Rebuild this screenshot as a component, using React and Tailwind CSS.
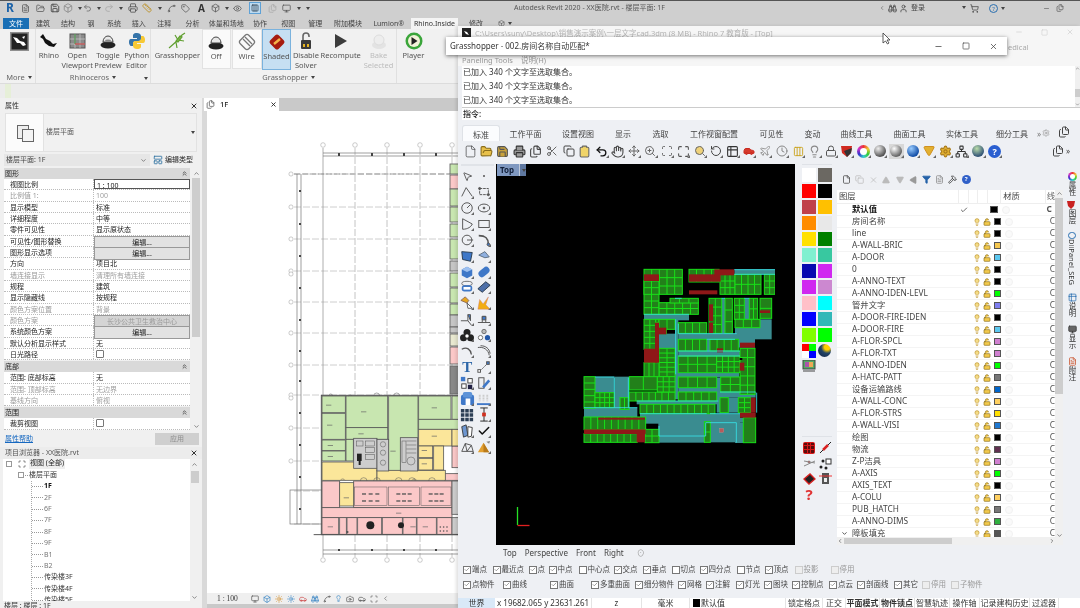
import React from "react";
import {
  File, FolderOpen, Save, Printer, Files, Scissors, Copy, Clipboard, Undo2, Redo2, Hand, Move, ZoomIn, Scan, Maximize, Search,
  RotateCcw, Table2, Car, Plane, Clock, Lightbulb, Lock, LockOpen, Settings, Network, Minus, Square, X, Check, ChevronDown, ChevronUp,
  ChevronLeft, ChevronRight, ChevronsUp, MousePointer2, Triangle, Filter, Hammer, LayoutPanelTop, Tag, Box, Columns3, ShoppingCart, User, Binoculars, Monitor, Ruler, FileText, Spline, Sun, Camera, Eye,
} from "lucide-react";

const Caret = () => <span className="inline-block w-0 h-0 border-x-[2.5px] border-x-transparent border-t-[3px] border-t-[#444] ml-[3px] align-middle" />;

const S = ({ children }) => (
  <svg width="14" height="14" viewBox="0 0 16 16" fill="none" stroke="#555" strokeWidth="1.1">{children}</svg>
);

function Prop({ label, value, dim, btn, box, check, bold }) {
  return (
    <div className="grid grid-cols-[90px_96px] h-[11.33px] leading-[11px] border-b border-dotted border-[#bbbbbb] bg-white">
      <div className={`pl-[6px] border-r border-dotted border-[#bbbbbb] truncate ${dim ? "text-[#9a9a9a]" : "text-[#222]"} ${bold ? "font-medium" : ""}`}>{label}</div>
      {btn ? (
        <div className={`text-center border border-[#999] ${dim ? "bg-[#d4d4d4] text-[#999]" : "bg-[#e2e2e2] text-[#222]"}`}>{value}</div>
      ) : check ? (
        <div className="pl-[2px] flex items-center"><span className="w-[8px] h-[8px] border border-[#777] bg-white rounded-[1px]" /></div>
      ) : (
        <div className={`pl-[2px] truncate ${box ? "border border-[#555]" : ""} ${dim ? "text-[#a0a0a0]" : "text-[#222]"}`}>{value}</div>
      )}
    </div>
  );
}

const Sec = ({ t }) => (
  <div className="h-[11px] bg-[#d9d9d9] flex items-center justify-between pl-[1px] pr-[2px] leading-none text-[#222]">
    <span>{t}</span>
    <ChevronsUp size={7} className="text-[#333]" strokeWidth={2.5} />
  </div>
);

const G1 = [
  ["视图比例", "1 : 100", { box: true }], ["比例值 1:", "100", { dim: true }], ["显示模型", "标准"], ["详细程度", "中等"], ["零件可见性", "显示原状态"],
  ["可见性/图形替换", "编辑...", { btn: true }], ["图形显示选项", "编辑...", { btn: true }], ["方向", "项目北"], ["墙连接显示", "清理所有墙连接", { dim: true }],
  ["规程", "建筑"], ["显示隐藏线", "按规程"], ["颜色方案位置", "背景", { dim: true }], ["颜色方案", "长沙公共卫生救治中心", { dim: true, btn: true }],
  ["系统颜色方案", "编辑...", { btn: true }], ["默认分析显示样式", "无"], ["日光路径", "", { check: true }],
];

function Properties() {
  return (
    <div className="h-[349px] flex flex-col text-[7px]">
      <div className="h-[14px] mt-[1px] px-[5px] flex items-center justify-between">
        <span className="text-[#333]">属性</span><X size={8} strokeWidth={3} className="text-[#333] mr-[-1px]" />
      </div>
      <div className="h-[39px] mx-[5px] bg-[#f1f1f1] border border-[#e2e2e2] flex items-center">
        <div className="w-[38px] h-full bg-[#fbfbfb] border-r border-[#e2e2e2] flex items-center justify-center">
          <svg width="20" height="20" viewBox="0 0 20 20" fill="#eee" stroke="#666"><rect x="2.5" y="2.5" width="11" height="13" /><rect x="7.5" y="6.5" width="11" height="12" fill="#f4f4f4" /></svg>
        </div>
        <span className="ml-[2px] text-[#555]">楼层平面</span>
        <span className="ml-auto mr-[1px]"><Caret /></span>
      </div>
      <div className="h-[12px] mt-[2px] ml-[4px] flex">
        <div className="w-[146px] bg-[#e6e6e6] pl-[2px] flex items-center justify-between pr-[3px] text-[#444]"><span>楼层平面: 1F</span><ChevronDown size={7} /></div>
        <div className="ml-[3px] flex items-center gap-[2px] text-[#222]">
          <LayoutPanelTop size={10} className="text-[#2a6f9f]" /><span>编辑类型</span>
        </div>
      </div>
      <div className="mt-[2px] ml-[4px] flex">
        <div className="w-[186px] h-[262px] overflow-hidden">
          <Sec t="图形" />
          {G1.map(([a, b, o]) => <Prop key={a} label={a} value={b} {...(o || {})} />)}
          <div className="h-[1px]" />
          <Sec t="底部" />
          <Prop label="范围: 底部标高" value="无" />
          <Prop label="范围: 顶部标高" value="无边界" dim />
          <Prop label="基线方向" value="俯视" dim />
          <div className="h-[1px]" />
          <Sec t="范围" />
          <Prop label="裁剪视图" check />
        </div>
        <div className="w-[10px] ml-[1px] bg-[#f0f0f0] flex flex-col items-center pt-[2px]">
          <ChevronUp size={7} className="text-[#444]" />
          <div className="w-[8px] h-[159px] mt-[1px] bg-[#cdcdcd]" />
          <div className="mt-auto"><ChevronDown size={7} className="text-[#444]" /></div>
        </div>
      </div>
      <div className="h-[14px] mt-[2px] ml-[5px] flex items-center justify-between pr-[3px]">
        <span className="text-[#1668c0] underline">属性帮助</span>
        <span className="w-[44px] h-[12px] bg-[#cfcfcf] text-[#8f8f8f] text-center leading-[12px]">应用</span>
      </div>
    </div>
  );
}

const Tw = ({ t, bold, dim }) => (
  <div className="h-[11.4px] flex items-center">
    <span className="w-[11px] border-t border-dotted border-[#999]" />
    <span className={`ml-[1px] ${bold ? "font-bold text-[#111]" : dim ? "text-[#777]" : "text-[#333]"}`}>{t}</span>
  </div>
);

function Browser() {
  return (
    <div className="flex-1 flex flex-col text-[7px] min-h-0">
      <div className="h-[12px] px-[5px] flex items-center justify-between bg-[#ececec] text-[#555]">
        <span>项目浏览器 - XX医院.rvt</span><X size={8} strokeWidth={3} className="text-[#333] mr-[-1px]" />
      </div>
      <div className="flex mx-[3px] h-[142px]">
        <div className="flex-1 bg-white overflow-hidden">
          <div className="h-[11.4px] mt-[-1px] flex items-center pl-[3px]">
            <span className="w-[6px] h-[6px] border border-[#999] mr-[6px]" />
            <Scan size={8} className="text-[#333]" />
            <span className="ml-[3px] bg-[#efefef] px-[1px] text-[#222]">视图 (全部)</span>
          </div>
          <div className="h-[11.4px] flex items-center pl-[15px]">
            <span className="w-[6px] h-[6px] border border-[#999] mr-[1px]" />
            <span className="w-[3px] border-t border-dotted border-[#999]" />
            <span className="ml-[1px] text-[#333]">楼层平面</span>
          </div>
          <div className="ml-[28px] border-l border-dotted border-[#aaa]">
            {["1F", "2F", "6F", "7F", "8F", "9F", "B1", "B2", "传染楼3F", "传染楼4F", "传染楼5F"].map((t, i) => (
              <Tw key={t} t={t} bold={i === 0} dim={i > 0 && i < 8} />
            ))}
          </div>
        </div>
        <div className="w-[9px] bg-[#f0f0f0] flex flex-col items-center pt-[2px]">
          <ChevronUp size={7} className="text-[#444]" />
          <div className="w-[8px] h-[12px] mt-[3px] bg-[#cdcdcd]" />
          <div className="mt-auto"><ChevronDown size={7} className="text-[#444]" /></div>
        </div>
      </div>
      <div className="h-[8px] pl-[4px] text-[#333] leading-[9px]">楼层 : 楼层 : 1F</div>
    </div>
  );
}

/* ---------- floor plan drawing ---------- */
const RG = [[15,45,70,50],[15,97,70,78],[15,177,70,32],[15,210,70,30],[87,45,125,95],[87,140,125,35],[87,175,22,65],[215,45,88,225],[305,45,97,70],[405,45,30,70],[305,115,130,30]];
const RY = [[15,243,165,55],[180,268,205,30],[305,145,100,50],[405,145,30,50],[305,195,42,35],[305,232,42,35],[350,195,30,72],[68,305,42,70]];
const RP = [[15,300,53,80],[110,300,295,80],[15,380,390,30],[15,410,50,50],[68,410,20,50],[90,410,30,50],[122,410,72,50],[196,410,60,50],[258,410,40,50],[300,410,58,50],[360,410,45,50],[383,278,50,20],[405,195,30,65]];
const RC = [[110,172,70,90],[180,175,35,95],[250,170,52,100],[405,300,30,100],[405,410,30,50]];
const RIGHT = [[163,10,"#c8e6b0"],[174,14,"#fbc8c8"],[188,17,"#c8e6b0"],[206,15,"#c8e6b0"],[223,13,"#c8e6b0"],[238,20,"#c8e6b0"],[260,10,"#c5c5c5"],[272,14,"#c8e6b0"],[287,15,"#c8e6b0"],[303,11,"#c8e6b0"],[314,12,"#c5c5c5"],[326,6,"#c5c5c5"],[333,12,"#e8e8d0"],[346,17,"#fbc8c8"],[365,28,"#888888"]];
const HY = [173,206,238,270,301,332,364,394,427,460,490,523];
const VX = [353,385,418,450];

function Plan() {
  return (
    <svg viewBox="205 110 253 482" className="w-full h-full block">
      {VX.map((x) => <line key={x} x1={x} x2={x} y1="147" y2="556" stroke="#c4c4c4" strokeWidth="1" strokeDasharray="7 2" />)}
      {HY.map((y) => <line key={y} x1="292" x2="449" y1={y} y2={y} stroke="#c8c8c8" strokeWidth="0.9" strokeDasharray="7 2" />)}
      <line x1="321" x2="321" y1="147" y2="556" stroke="#999" strokeWidth="0.8" />
      {[321, ...VX].map((x) => (
        <g key={x} fill="#fff" stroke="#aaa" strokeWidth="0.6"><circle cx={x} cy="144" r="2.3" /><circle cx={x} cy="559" r="2.3" /></g>
      ))}
      {HY.slice(0, 10).map((y) => <circle key={y} cx="289" cy={y} r="2.1" fill="#fff" stroke="#aaa" strokeWidth="0.6" />)}
      <circle cx="289" cy="273" r="2.1" fill="#fff" stroke="#aaa" strokeWidth="0.6" />
      <circle cx="289" cy="397" r="2.1" fill="#fff" stroke="#aaa" strokeWidth="0.6" />
      <g stroke="#777" strokeWidth="0.7">
        <line x1="321" x2="460" y1="152" y2="152" /><line x1="321" x2="460" y1="155" y2="155" />
        <line x1="321" x2="460" y1="549" y2="549" /><line x1="321" x2="460" y1="553" y2="553" />
        <line x1="295" x2="295" y1="173" y2="523" /><line x1="299" x2="299" y1="173" y2="523" />
        <line x1="292" x2="448" y1="173" y2="173" strokeDasharray="6 2" />
        <rect x="288" y="489" width="33" height="34" fill="none" />
      </g>
      {[336, 369, 401, 433].map((x) => <g key={x} fill="#444"><rect x={x} y="152" width="2" height="3" /><rect x={x} y="548" width="2" height="2" /></g>)}
      {[189, 222, 254, 286, 318, 349, 379, 411, 443, 475, 507].map((y) => <rect key={y} x="297" y={y} width="2" height="2" fill="#444" />)}
      <g stroke="#666" strokeWidth="0.9">
        {RIGHT.map(([y, h, f]) => <rect key={y} x="448" y={y} width="14" height={h} fill={f} />)}
      </g>
      <g transform="translate(315 380) scale(0.3333)" stroke="#555" strokeWidth="2.4">
        <rect x="14" y="44" width="422" height="417" fill="#fff" stroke="none" />
        {RG.map((r) => <rect key={r.join()} x={r[0]} y={r[1]} width={r[2]} height={r[3]} fill="#c8e6b0" />)}
        {RP.map((r) => <rect key={r.join()} x={r[0]} y={r[1]} width={r[2]} height={r[3]} fill="#fbc8c8" />)}
        {RY.map((r) => <rect key={r.join()} x={r[0]} y={r[1]} width={r[2]} height={r[3]} fill="#fbe69a" />)}
        {RC.map((r) => <rect key={r.join()} x={r[0]} y={r[1]} width={r[2]} height={r[3]} fill="#cdcdcd" />)}
        <g fill="none" strokeWidth="1.5">
          <rect x="112" y="318" width="98" height="55" /><rect x="214" y="318" width="94" height="55" /><rect x="312" y="318" width="90" height="55" />
          <path d="M130 300a10 10 0 0 1 20 0M170 300a10 10 0 0 1 20 0M235 300a10 10 0 0 1 20 0M275 300a10 10 0 0 1 20 0M335 300a10 10 0 0 1 20 0M70 298a8 8 0 0 1 14 0M285 298a8 8 0 0 1 14 0" />
          <path d="M35 45a6 6 0 0 1 12 0M95 45a6 6 0 0 1 10 0M170 45a6 6 0 0 1 18 0M230 45a6 6 0 0 1 18 0" />
          <rect x="255" y="180" width="12" height="65" /><circle cx="282" cy="240" r="12" /><path d="M268 180h30M268 192h30M268 204h30M268 216h30" />
          <circle cx="198" cy="190" r="8" /><circle cx="198" cy="215" r="8" /><circle cx="198" cy="245" r="8" />
          <rect x="118" y="180" width="20" height="15" /><rect x="145" y="180" width="28" height="15" /><rect x="145" y="200" width="28" height="15" /><rect x="145" y="220" width="28" height="15" />
        </g>
        <g fill="#555" stroke="none">
          <rect x="120" y="218" width="14" height="22" fill="#222" /><rect x="125" y="238" width="6" height="14" fill="#222" />
          <circle cx="160" cy="433" r="12" fill="#222" /><circle cx="252" cy="433" r="9" fill="#222" /><rect x="88" y="450" width="6" height="6" />
          {[135,155,175,238,255,272,335,352,368].map((x) => <React.Fragment key={x}><rect x={x} y="337" width="12" height="4" /><rect x={x} y="358" width="12" height="4" /></React.Fragment>)}
          {[370,380,390].map((x) => <React.Fragment key={x}><circle cx={x} cy="438" r="2.500" /><circle cx={x} cy="450" r="2.500" /></React.Fragment>)}
        </g>
        <g fill="#666" stroke="none" opacity="0.7">
          {[[35,72],[38,132],[40,193],[40,226],[140,92],[132,158],[228,210],[352,80],[352,165],[322,208],[322,248],[88,350],[245,396],[40,437],[288,437],[325,437]].map(([x, y]) => <rect key={x + "-" + y} x={x - 8} y={y - 1} width="16" height="3" />)}
        </g>
        <rect x="13" y="43" width="423" height="418" fill="none" strokeWidth="3" />
        <line x1="-10" x2="440" y1="461" y2="461" strokeWidth="3" />
      </g>
    </svg>
  );
}

/* ---------- ribbon ---------- */
const Rb = ({ cls, lines, children, dim }) => (
  <div className={`${cls} h-[41px] flex flex-col items-center pt-[2px]`}>
    <div className="h-[20px] flex items-center justify-center">{children}</div>
    <div className={`text-center leading-[9.5px] whitespace-nowrap ${dim ? "text-[#bcbcbc]" : "text-[#555]"}`}>
      {lines.map((l) => <div key={l}>{l}</div>)}
    </div>
  </div>
);

const Dome = ({ hatch }) => (
  <svg width="18" height="18" viewBox="0 0 18 18">
    <ellipse cx="9" cy="13" rx="7.5" ry="3.5" fill="#222" />
    <path d="M4 10a5 6 0 0 1 10 0z" fill="#e8e8e8" stroke="#444" />
    {hatch && <ellipse cx="9" cy="8.5" rx="3" ry="1" fill="#888" />}
  </svg>
);

function RibbonTabs() {
  const tabs = [["建筑","w-[26px]"],["结构","w-[24px]"],["钢","w-[22px]"],["系统","w-[24px]"],["插入","w-[25.500px]"],["注释","w-[25.500px]"],["分析","w-[31px]"],["体量和场地","w-[36.500px]"],["协作","w-[31px]"],["视图","w-[25.500px]"],["管理","w-[28.500px]"],["附加模块","w-[37px]"],["Lumion®","w-[44.500px]"]];
  return (
    <div className="h-[11px] flex items-stretch pl-[3px] text-[7px] text-[#444] leading-[11px] whitespace-nowrap">
      <div className="w-[26px] bg-[#1a6fb5] text-white text-center mr-[1px]">文件</div>
      {tabs.map(([t, c]) => <div key={t} className={`${c} flex justify-center`}>{t}</div>)}
      <div className="w-[47px] bg-[#f4f4f4] text-center text-[#333]">Rhino.Inside</div>
      <div className="ml-[11px] w-[14px] text-center">修改</div>
      <div className="ml-[15px] flex items-center text-[#555]"><Box size={7} /><Caret /></div>
    </div>
  );
}

function QuickBar() {
  const items = [
    [<span className="text-[#1b62a8] font-bold text-[12px] leading-none">R</span>, "w-[14px]"],
    [<FileText size={9} />, "w-[16px]"], [<FolderOpen size={9} />, "w-[15px]"], [<Save size={10} strokeWidth={2.2} className="text-[#4a4a4a]" />, "w-[14px]"],
    [<Box size={10} className="text-[#888]" />, "w-[11px]"], [<Caret />, "w-[10px]"], [<Undo2 size={10} className="text-[#666]" />, "w-[9px]"], [<Caret />, "w-[11px]"], [<Redo2 size={10} className="text-[#aaa]" />, "w-[11px]"], [<Caret />, "w-[11px]"],
    [<Printer size={10} strokeWidth={2} />, "w-[16px]"], [<Ruler size={10} className="text-[#b98a16]" />, "w-[12px]"], [<Caret />, "w-[11px]"], [<Spline size={9} />, "w-[15px]"], [<Tag size={9} />, "w-[13px]"],
    [<span className="font-bold text-[10px] leading-none text-[#333]">A</span>, "w-[19px]"], [<Box size={10} />, "w-[9px]"], [<Caret />, "w-[10px]"], [<Eye size={9} />, "w-[15px]"],
    [<span className="w-[12px] h-[12px] bg-[#bcd9ef] border border-[#5ea1d6] flex items-center justify-center"><Columns3 size={8} className="text-[#234]" /></span>, "w-[20px]"],
    [<Files size={9} className="text-[#aaa]" />, "w-[14px]"], [<Monitor size={9} />, "w-[14px]"], [<Caret />, "w-[8px]"], [<Caret />, "w-[10px]"],
  ];
  return (
    <div className="h-[17px] pb-[3px] flex items-center pl-[3px] text-[#555]">
      {items.map(([n, c], i) => <div key={i} className={`${c} flex justify-center items-center`}>{n}</div>)}
      <div className="ml-[203px] w-[158px] whitespace-nowrap text-[7px] text-[#555]">Autodesk Revit 2020 - XX医院.rvt - 楼层平面: 1F</div>
      <div className="ml-[207px] flex items-center text-[7px] text-[#444]">
        <ChevronLeft size={6} /><Binoculars size={9} className="ml-[3px]" /><User size={9} className="ml-[2px]" /><span className="ml-[3px]">登录</span>
        <span className="ml-[34px]"><Caret /></span><ShoppingCart size={9} className="ml-[4px]" /><span className="ml-[10px] w-[9px] h-[9px] rounded-full border border-[#2a6fb0] text-[6px] leading-[8px] text-center text-[#2a6fb0]">?</span><Caret />
        <Minus size={7} className="ml-[38px] text-[#555]" /><Files size={8} className="ml-[6px] text-[#555]" />
      </div>
    </div>
  );
}

function Ribbon() {
  return (
    <div className="h-[55px] bg-[#f1f1f1] flex text-[7.5px] border-b border-[#dcdcdc]">
      <div className="w-[36px] pl-[3px] border-r border-[#e0e0e0] flex flex-col">
        <div className="h-[41px] flex items-start justify-center pt-[3px]">
          <svg width="19" height="19" viewBox="0 0 19 19"><rect width="19" height="19" fill="#8f8f8f" /><rect x="1.500" y="1.500" width="16" height="16" fill="#222" /><path d="M3 5l4 1 3 3 4 1 2 3-3 1-3-3-3 0z" fill="#fff" /><path d="M12 5l3-1-1 3z" fill="#fff" /></svg>
        </div>
        <div className="h-[11px] mt-[2px] text-[#666] text-center">More<Caret /></div>
      </div>
      <div className="w-[115px] border-r border-[#e0e0e0] flex flex-col">
        <div className="flex">
          <Rb cls="w-[26px]" lines={["Rhino"]}><svg width="19" height="16" viewBox="0 0 19 16"><path d="M1 4l3-3 3 5 4 2 3 3 4-1-3 4-5-1-4-3-2-4z" fill="#111" /></svg></Rb>
          <Rb cls="w-[31px]" lines={["Open", "Viewport"]}>
            <svg width="17" height="16" viewBox="0 0 17 16"><rect x="1" y="1" width="15" height="14" fill="#8b8b8b" stroke="#555" /><path d="M1 6h15M1 11h15M6 1v14M11 1v14" stroke="#ccc" strokeWidth=".7" /><path d="M6 1v10" stroke="#3a8f3a" /><path d="M6 11h10" stroke="#c33" /></svg>
          </Rb>
          <Rb cls="w-[31px]" lines={["Toggle", "Preview"]}><Dome hatch /></Rb>
          <Rb cls="w-[27px]" lines={["Python", "Editor"]}>
            <svg width="18" height="18" viewBox="0 0 18 18"><path d="M9 1C5 1 5 3 5 4v2h4v1H3C1 7 1 9 1 10.500S2 14 3 14h2v-2c0-2 1-3 3-3h3c1 0 2-1 2-2V4c0-2-2-3-4-3z" fill="#3573a8" /><path d="M9 17c4 0 4-2 4-3v-2H9v-1h6c2 0 2-2 2-3.500S16 4 15 4h-2v2c0 2-1 3-3 3H7c-1 0-2 1-2 2v3c0 2 2 3 4 3z" fill="#f7c935" /></svg>
          </Rb>
        </div>
        <div className="h-[11px] mt-[2px] text-[#666] text-center relative">Rhinoceros<Caret /><span className="absolute right-[2px] top-[1px]"><Caret /></span></div>
      </div>
      <div className="w-[246px] border-r border-[#e0e0e0] flex flex-col">
        <div className="flex">
          <Rb cls="w-[51px] pl-[2px]" lines={["Grasshopper"]}>
            <svg width="20" height="18" viewBox="0 0 20 18" fill="none" stroke="#5f9e2f" strokeWidth="1.2"><path d="M2 16L11 8l4-5 3-2M11 8l6 1M9 10l1 6M11 8L8 3" /><path d="M9 9l4-5 2 1-4 5z" fill="#7ab648" /></svg>
          </Rb>
          <div className="w-[29px] h-[40px] border border-[#e2e2e2] bg-[#fafafa]"><Rb cls="w-full" lines={["Off"]}><Dome /></Rb></div>
          <div className="w-[30px] h-[40px] ml-[1px] border border-[#e2e2e2] bg-[#fafafa]">
            <Rb cls="w-full" lines={["Wire"]}><svg width="18" height="18" viewBox="0 0 18 18" fill="none" stroke="#777" strokeWidth="1.3"><rect x="3" y="3" width="12" height="12" rx="2.500" transform="rotate(45 9 9)" /><path d="M5 6l7 7M7 4l7 7" /></svg></Rb>
          </div>
          <div className="w-[30px] h-[41px] border border-[#7ab2dd] bg-[#c6dff2]">
            <Rb cls="w-full" lines={["Shaded"]}><svg width="18" height="18" viewBox="0 0 18 18"><rect x="3" y="3" width="12" height="12" rx="2.500" fill="#a61c10" transform="rotate(45 9 9)" /><path d="M6 11l6-5" stroke="#f5b44a" strokeWidth="2.400" /></svg></Rb>
          </div>
          <Rb cls="w-[29px]" lines={["Disable", "Solver"]}><svg width="16" height="18" viewBox="0 0 16 18"><rect x="3" y="8" width="10" height="9" rx="1" fill="#3a3a3a" /><path d="M5 8V4a3 3 0 0 1 6 0v1" fill="none" stroke="#666" strokeWidth="1.600" /><rect x="5" y="12" width="2" height="3" fill="#e6b422" /><rect x="9" y="12" width="2" height="3" fill="#e6b422" /></svg></Rb>
          <Rb cls="w-[41px]" lines={["Recompute"]}><svg width="14" height="16" viewBox="0 0 14 16"><path d="M1 1l12 7-12 7z" fill="#3c3c3c" /></svg></Rb>
          <Rb cls="w-[35px]" lines={["Bake", "Selected"]} dim><svg width="18" height="18" viewBox="0 0 18 18"><ellipse cx="9" cy="13" rx="7" ry="4" fill="#e3e3e3" /><circle cx="9" cy="8" r="5" fill="#ededed" stroke="#ddd" /></svg></Rb>
        </div>
        <div className="h-[11px] mt-[2px] text-[#666] text-center pl-[30px]">Grasshopper<Caret /></div>
      </div>
      <div className="w-[33px]">
        <Rb cls="w-full" lines={["Player"]}><svg width="18" height="18" viewBox="0 0 18 18"><circle cx="9" cy="9" r="8.500" fill="#3aa53a" /><circle cx="9" cy="9" r="6" fill="#f2f2d8" /><path d="M6.500 5l6 4-6 4z" fill="#222" /></svg></Rb>
      </div>
    </div>
  );
}

function ViewArea() {
  const icons = [<Monitor size={8} />, <Box size={8} className="text-[#2d7fc1]" />, <Sun size={8} className="text-[#d08a20]" />, <Sun size={8} className="text-[#2d7fc1]" />, <Car size={8} className="text-[#c44]" />, <Binoculars size={8} className="text-[#2d7fc1]" />, <Spline size={8} />, <Lightbulb size={7} className="text-[#2d7fc1]" />, <Camera size={8} />, <Car size={8} />, <Scan size={8} />];
  return (
    <div className="w-[253px] ml-[5px] flex flex-col text-[7.5px]">
      <div className="h-[13px] flex bg-[#c9c9c9]">
        <div className="ml-[-3px] w-[75px] bg-white flex items-center pl-[2px] justify-between pr-[2px]">
          <span className="flex items-center gap-[5px] font-medium"><Files size={9} className="text-[#555]" />1F</span>
          <X size={7} strokeWidth={3} />
        </div>
      </div>
      <div className="flex-1 bg-white min-h-0"><Plan /></div>
      <div className="h-[11px] bg-[#efefef] flex items-center pl-[10px] text-[#333] font-['Liberation_Serif',serif] text-[7.5px]">
        <span className="w-[34px]">1 : 100</span>
        <span className="flex items-center gap-[4px] text-[#555]">{icons.map((n, i) => <span key={i}>{n}</span>)}<ChevronLeft size={7} /></span>
      </div>
      <div className="h-[5px] bg-[#c9c9c9]" />
    </div>
  );
}

/* ---------- Rhino ---------- */
const Flyout = ({ children, ind = true }) => (
  <div className="relative w-[16.4px] h-[16px] flex items-center justify-center shrink-0">
    {children}
    {ind && <span className="absolute right-[1px] bottom-[1px] w-0 h-0 border-l-[3px] border-l-transparent border-b-[3px] border-b-[#666]" />}
  </div>
);

const Ball = ({ cls }) => <span className={`block w-[12px] h-[12px] rounded-full ${cls}`} />;

function TopTools() {
  const t = [
    <File size={13} strokeWidth={1.2} className="text-[#333]" />, <FolderOpen size={13} fill="#e8c04a" className="text-[#8a6d1a]" />, <Save size={13} fill="#c9a23c" className="text-[#555]" />, <Printer size={13} fill="#999" className="text-[#333]" />,
    <Files size={13} className="text-[#444]" />, <Scissors size={12} className="text-[#666]" />, <Copy size={12} className="text-[#444]" />, <Clipboard size={13} fill="#f0d468" className="text-[#666]" />,
    <Undo2 size={13} strokeWidth={2.4} className="text-[#111]" />, <Hand size={13} className="text-[#444]" />, <Move size={12} className="text-[#666]" />, <ZoomIn size={12} className="text-[#666]" />,
    <Scan size={12} className="text-[#666]" />, <Maximize size={13} className="text-[#555]" />, <Search size={12} fill="#efd27a" className="text-[#666]" />, <RotateCcw size={12} className="text-[#444]" />,
    <Table2 size={13} className="text-[#333]" />, <Car size={12} className="text-[#c82a20]" fill="#d6392b" />, <Plane size={12} className="text-[#999]" />, <Clock size={12} className="text-[#888]" />,
    <Columns3 size={11} className="text-[#c9a21c]" />, <Lightbulb size={13} className="text-[#888]" />, <Lock size={12} className="text-[#555]" />,
    <svg width="14" height="14" viewBox="0 0 14 14"><path d="M1 2l11 0-1 7-4 4-5-4z" fill="#d02a20" /><path d="M4 7l8-3-1 5-4 4z" fill="#333" /></svg>,
    <span className="block w-[13px] h-[13px] rounded-full bg-[conic-gradient(#e33,#ec3,#3c3,#3cc,#33c,#c3c,#e33)] p-[3px]"><span className="block w-full h-full rounded-full bg-white" /></span>,
    <Ball cls="bg-[radial-gradient(circle_at_35%_30%,#eee,#555_70%)]" />,
    <span className="w-[15px] h-[15px] bg-[#d8d8d8] flex items-center justify-center"><Ball cls="bg-[radial-gradient(circle_at_35%_30%,#fff,#666_70%)]" /></span>,
    <Ball cls="bg-[radial-gradient(circle_at_35%_30%,#9cf,#1450a8_70%)]" />,
    <Triangle size={12} className="text-[#d09020] rotate-180" fill="#e2b030" />, <Settings size={13} className="text-[#a8791a]" fill="#e2b030" />, <Network size={13} className="text-[#333]" />,
    <Ball cls="bg-[radial-gradient(circle_at_40%_30%,#bda,#357_70%)]" />,
    <span className="block w-[13px] h-[13px] rounded-full bg-[#2a5fd0] text-white text-[9px] font-bold text-center leading-[13px]">?</span>,
  ];
  return (
    <div className="h-[20px] pl-[4px] flex items-center">
      {t.map((n, i) => <Flyout key={i} ind={i > 7}>{n}</Flyout>)}
      <div className="ml-[49px]"><Files size={12} className="text-[#444]" /></div><span className="text-[8px] text-[#444] ml-[2px]">»</span>
    </div>
  );
}

function LeftTools() {
  const b = "#3f78c8";
  const t = [
    <MousePointer2 size={11} className="text-[#555]" />, <span className="w-[2px] h-[2px] bg-[#555] rounded-full" />,
    <S><path d="M2 13L7 3l7 10" /></S>, <S><path d="M3 4h10v7H3z" strokeDasharray="3 1" /><circle cx="3" cy="4" r="1.200" fill="#555" /><circle cx="13" cy="11" r="1.200" fill="#555" /></S>,
    <S><circle cx="8" cy="8" r="6" /><path d="M8 8l4-4" /></S>, <S><ellipse cx="8" cy="8" rx="6.500" ry="4.500" /><circle cx="8" cy="8" r="1" fill="#555" /></S>,
    <S><path d="M3 2v12c6 0 10-3 11-6z" /></S>, <S><rect x="2" y="4" width="12" height="8" /></S>,
    <S><circle cx="8" cy="8" r="5.500" /><path d="M8 8h7" /></S>, <S><path d="M2 3c8 0 11 3 11 10" strokeWidth="2" /><circle cx="13" cy="13" r="1.500" fill={b} /></S>,
    <svg width="14" height="14" viewBox="0 0 16 16"><path d="M2 3l12 1-2 10L3 12z" fill={b} stroke="#234" /></svg>, <svg width="14" height="14" viewBox="0 0 16 16"><path d="M2 7l7-4 5 6-5 1z" fill="#8fb0e0" stroke="#567" /></svg>,
    <svg width="14" height="14" viewBox="0 0 16 16"><path d="M2 5l6-3 6 3v7l-6 3-6-3z" fill={b} /><path d="M2 5l6 3 6-3-6-3z" fill="#9dc0f0" /></svg>, <svg width="14" height="14" viewBox="0 0 16 16"><rect x="1" y="4" width="14" height="8" rx="4" fill={b} transform="rotate(-40 8 8)" /></svg>,
    <svg width="14" height="14" viewBox="0 0 16 16"><ellipse cx="8" cy="4" rx="6" ry="2.500" fill="none" stroke="#666" /><rect x="2" y="6" width="12" height="7" rx="3" fill={b} /><rect x="4" y="8" width="8" height="3" fill="#fff" /></svg>, <svg width="14" height="14" viewBox="0 0 16 16"><path d="M1 10l9-8 5 4-9 8z" fill="#4d6fa8" stroke="#234" /></svg>,
    <svg width="14" height="14" viewBox="0 0 16 16"><path d="M1 5l5-4 4 4-2 3z" fill="#e6a51e" stroke="#865" /><path d="M8 8l6 6-5 0z" fill="#fff" stroke="#555" /></svg>, <svg width="14" height="14" viewBox="0 0 16 16"><path d="M1 15l2-11 4 5 6-8-3 9 5 5z" fill="#f2ad12" stroke="#c77" strokeWidth=".5" /></svg>,
    <S><path d="M1 10h8V3M9 10l4 5" /><path d="M9 3l3 0v7z" fill={b} /></S>, <S><path d="M1 12h14M6 12V5h4v7" /><path d="M6 5h4v4H6z" fill={b} /></S>,
    <svg width="14" height="14" viewBox="0 0 16 16"><circle cx="8" cy="5" r="4" fill="#222" /><circle cx="4" cy="11" r="4" fill="#222" /><circle cx="12" cy="11" r="4" fill="#222" /><circle cx="8" cy="9" r="2" fill="#fff" /></svg>, <svg width="14" height="14" viewBox="0 0 16 16"><circle cx="8" cy="4" r="2.500" fill="#bbb" stroke="#666" /><circle cx="4" cy="11" r="2.500" fill="#fff" stroke="#666" /><circle cx="12" cy="11" r="3" fill="#2458a8" /></svg>,
    <S><path d="M2 6c6-3 10 0 11 6" strokeWidth="1.500" /></S>, <S><path d="M1 4c6-1 12 2 13 9M4 2c6 0 10 3 11 9" /></S>,
    <span className="text-[#2c66a8] font-bold font-['Liberation_Serif',serif] text-[15px] leading-none">T</span>, <S><path d="M3 13L13 3" strokeDasharray="2 1" /><rect x="1" y="11" width="3" height="3" fill="#fff" /><rect x="11" y="2" width="3" height="3" fill={b} /></S>,
    <svg width="14" height="14" viewBox="0 0 16 16"><rect x="1" y="1" width="5" height="5" fill={b} /><rect x="9" y="3" width="5" height="5" fill="#fff" stroke="#333" /><rect x="2" y="9" width="5" height="5" fill="#fff" stroke="#333" /><rect x="9" y="10" width="5" height="5" fill="#224" /></svg>, <S><rect x="2" y="2" width="6" height="12" /><path d="M7 13l7-8" stroke={b} strokeWidth="3" /></S>,
    <svg width="15" height="15" viewBox="0 0 16 16"><rect x="1" y="4" width="14" height="11" rx="2" fill={b} /><rect x="3" y="1" width="10" height="6" rx="2" fill="#5d93d8" /><rect x="6" y="8" width="5" height="7" fill="#fff" /></svg>, <svg width="15" height="15" viewBox="0 0 16 16"><path d="M1 13h14v2H1z" fill={b} /><path d="M4 4v7M8 4v7M12 4v7" stroke="#ccc" strokeWidth="2" strokeDasharray="2 1" /></svg>,
    <svg width="14" height="14" viewBox="0 0 16 16" fill="#2d3f55"><path d="M1 1h4v4H1zM6 1h4v4H6zM11 1h4v4h-4zM1 6h4v4H1zM6 6h4v4H6zM11 6h4v4h-4zM1 11h4v4H1zM6 11h4v4H6zM11 11h4v4h-4z" /></svg>, <svg width="12" height="15" viewBox="0 0 12 16"><path d="M2 1h8M2 15h8M6 1v14" stroke="#222" /><rect x="4" y="6" width="4" height="4" fill="#d03020" /></svg>,
    <svg width="14" height="14" viewBox="0 0 16 16"><path d="M2 3l5-2 2 12-5 2z" fill="#6d96d0" stroke="#333" /><path d="M9 3l5 1-1 10-4 1z" fill="#fff" stroke="#333" /></svg>, <Check size={14} strokeWidth={2.600} className="text-[#111]" />,
    <S><path d="M2 13l4-9 7 2 2 7z" /><path d="M6 4l2 9M13 6l-5 7" /></S>, <svg width="15" height="15" viewBox="0 0 16 16"><path d="M2 14L8 4l6 10z" fill="#e3a030" /><path d="M8 4l6 10H8z" fill="#b97a1a" /><path d="M11 3l4-1-1 3z" fill="#888" /></svg>,
  ];
  const noFly = [0, 1, 24, 30];
  return (
    <div className="w-[38px] pl-[1px] pt-[3px] flex flex-col">
      <div className="h-[2px] mx-[2px] bg-[#e0e3e8] mb-[2px]" />
      <div className="grid grid-cols-[16.4px_16.4px] auto-rows-[15.93px]">
        {t.map((n, i) => <Flyout key={i} ind={!noFly.includes(i)}>{n}</Flyout>)}
      </div>
    </div>
  );
}

const TEAL = [[478,25,122,15],[207,158,135,20],[252,218,50,45],[300,112,20,58],[300,175,10,240],[310,218,175,17],[395,235,10,50],[310,270,185,15],[302,335,190,14],[480,175,110,60],[490,200,50,60],[60,347,58,48],[118,347,45,100],[27,440,160,28],[185,420,245,10],[195,458,300,30],[250,470,140,75],[390,470,118,14],[480,484,25,62],[405,484,75,60],[425,350,12,105],[310,380,120,13],[435,393,107,17],[460,410,30,45],[440,112,10,106],[508,112,15,70]];
const GREEN = [[207,25,115,75,5,3],[207,60,45,100,2,5],[252,125,118,35,5,2],[285,112,85,14,3,1],[342,25,90,38,4,1],[435,40,45,60,3,3],[480,40,78,60,4,2],[568,40,32,60,2,3],[402,112,38,105,2,4],[450,112,22,105,1,3],[478,112,30,63,2,3],[523,112,25,63,2,2],[555,112,35,60,1,2],[480,175,75,25,3,1],[207,175,35,90,2,5],[242,175,10,10,1,1],[252,175,48,30,2,1],[252,205,22,13,1,1],[310,185,85,32,4,1],[310,235,85,35,4,1],[405,235,85,35,4,1],[252,262,48,85,2,6],[310,285,115,50,4,2],[425,285,70,50,4,3],[495,262,45,138,2,5],[207,305,45,50,3,1],[27,347,33,95,1,5],[60,395,58,45,4,3],[163,347,84,40,2,1],[163,393,137,27,7,1],[247,347,53,46,3,3],[310,348,115,32,4,1],[310,393,115,27,5,1],[437,348,58,45,2,2],[195,430,225,28,11,1],[135,410,27,35,2,1],[27,468,185,38,9,1],[27,518,160,26,8,1],[505,470,37,75,1,1],[388,482,18,62,1,2],[210,505,42,40,2,2],[435,410,25,45,1,1],[490,410,37,45,2,3]];
const RED = [[207,40,45,20],[240,185,12,120],[207,263,40,42],[252,200,22,20],[495,245,45,15],[495,455,47,15],[527,410,15,45],[27,505,185,14],[185,518,25,26],[70,470,140,6],[342,88,85,12],[342,40,95,22],[418,25,60,18],[402,130,12,50],[402,185,12,32],[426,262,18,12],[494,305,14,24],[555,148,30,8]];

function RhinoMap() {
  return (
    <svg viewBox="0 0 600 570" className="absolute left-[79px] top-[97px] w-[200px] h-[190px]">
      {TEAL.map((r) => <rect key={r.join()} x={r[0]} y={r[1]} width={r[2]} height={r[3]} fill="#3a8c90" />)}
      {GREEN.map(([x, y, w, h, c, r]) => (
        <g key={[x, y].join()} stroke="#18e018" strokeWidth="3" fill="none">
          <rect x={x} y={y} width={w} height={h} fill="#22801a" />
          {Array.from({ length: c - 1 }, (_, i) => <line key={"c" + i} x1={x + (w * (i + 1)) / c} x2={x + (w * (i + 1)) / c} y1={y} y2={y + h} />)}
          {Array.from({ length: r - 1 }, (_, i) => <line key={"r" + i} y1={y + (h * (i + 1)) / r} y2={y + (h * (i + 1)) / r} x1={x} x2={x + w} />)}
        </g>
      ))}
      {RED.map((r) => <rect key={r.join()} x={r[0]} y={r[1]} width={r[2]} height={r[3]} fill="#8f1818" />)}
      <g fill="none" stroke="#38e0e4" strokeWidth="2.600">
        <path d="M302 175v165M118 350v90M160 350v90M252 495v30h140v-40h92v60M310 218v-30M480 235h-85M405 458h90M545 395v60M60 348h58M207 160h135M310 218h175M310 285h185M310 270h185M185 420h245M195 458h200M27 440h160M435 393h107M478 26h122M478 40h122M300 112h20M440 112h10M508 112h15" />
      </g>
      <rect x="434" y="502" width="12" height="12" fill="#b85a5a" stroke="#d89090" />
      <rect x="494" y="291" width="8" height="6" fill="#000" />
    </svg>
  );
}

function Viewport() {
  return (
    <div className="w-[300px] flex flex-col">
      <div className="relative flex-1 bg-black mt-[3px]">
        <div className="absolute left-[1px] top-0 w-[29px] h-[12px] bg-[#7f98c0] flex items-center text-[8px] font-bold text-[#12203a]">
          <span className="pl-[3px] w-[22px]">Top</span><span className="w-[7px] h-full bg-[#5f78a0] flex items-center justify-center border-l border-white/60"><Caret /></span>
        </div>
        <RhinoMap />
        <svg className="absolute left-[20px] top-[342px]" width="14" height="22" viewBox="0 0 14 22"><path d="M1.500 1v18" stroke="#25e025" strokeWidth="1.300" /><path d="M1.500 19.500h12" stroke="#e02020" strokeWidth="1.300" /></svg>
      </div>
    </div>
  );
}

function Palette() {
  const c = ["bg-white","bg-[#6b6862]","bg-[#ff0000]","bg-black","bg-[#c0404a]","bg-[#ffc000]","bg-[#ff8c00]","bg-[#e8e8e8]","bg-[#ffe000]","bg-[#008000]","bg-[#80f0d0]","bg-[#38c8a0]","bg-[#0808b0]","bg-[#d028f0]","bg-[#d028f0]","bg-[#cc88d0]","bg-[#ffc0c8]","bg-[#00ffff]","bg-[#0000ff]","bg-[#30b8b8]","bg-[#80ff00]","bg-[#00ff00]"];
  return (
    <div className="w-[42px] pl-[7px] pt-[3px] flex flex-col">
      <div className="h-[1px] w-[30px] bg-[#dfe2e7] mb-[3px]" />
      <div className="grid grid-cols-[14px_14px] gap-x-[2px] gap-y-[2px] auto-rows-[14px]">
        {c.map((x, i) => <span key={i} className={x} />)}
        <svg width="14" height="14" viewBox="0 0 14 14"><rect width="7" height="7" fill="#f00" /><rect x="7" width="7" height="7" fill="#0f0" /><rect y="7" width="7" height="7" fill="#fff" /><rect x="7" y="7" width="7" height="7" fill="#00f" /></svg>
        <span className="block w-[13px] h-[13px] rounded-full bg-[radial-gradient(circle_at_70%_25%,#fc0_0_20%,#246_45%,#124)]" />
        <svg width="14" height="12" viewBox="0 0 14 12"><rect x="1" width="12" height="9" fill="#5a6" stroke="#444" /><rect x="3" y="2" width="4" height="5" fill="#a5a" /><rect x="7" y="2" width="4" height="5" fill="#ea5" /><path d="M1 11h12" stroke="#444" /></svg>
      </div>
      <div className="mt-[62px] h-[1px] w-[30px] bg-[#dfe2e7]" />
      <div className="mt-[3px] grid grid-cols-[16px_16px] auto-rows-[15.500px] items-center justify-items-center ml-[-1px]">
        <span className="w-[12px] h-[12px] bg-[#d81818] rounded-[2px] grid grid-cols-3 gap-[1px] p-[1px]">{[0,1,2,3,4,5,6,7,8].map((i) => <span key={i} className="bg-[#5a0c0c]" />)}</span>
        <svg width="13" height="13" viewBox="0 0 13 13"><path d="M1 12L12 1" stroke="#222" /><path d="M4 9l5-5" stroke="#d82020" strokeWidth="2.500" /></svg>
        <svg width="13" height="13" viewBox="0 0 13 13" fill="none" stroke="#888"><path d="M1 4l11 2M1 9l11-5" /><circle cx="6" cy="5" r="1" fill="#d82020" /></svg>
        <svg width="13" height="13" viewBox="0 0 13 13"><rect x="7" y="2" width="5" height="5" fill="#fff" stroke="#333" /><circle cx="4" cy="4" r="1.500" fill="#222" /><circle cx="2" cy="10" r="1.500" fill="#222" /><circle cx="7" cy="11" r="1.500" fill="#222" /></svg>
        <svg width="13" height="13" viewBox="0 0 13 13"><path d="M1 7l6-5 5 5-6 5z" fill="#222" stroke="#d82020" strokeWidth="1.300" /></svg>
        <svg width="13" height="13" viewBox="0 0 13 13"><rect x="3" y="1" width="7" height="11" fill="#555" /><path d="M0 4h13" stroke="#e33" /><rect x="5" y="6" width="3" height="4" fill="#eee" /></svg>
        <span className="text-[#e03434] text-[15px] leading-none font-bold">?</span>
      </div>
    </div>
  );
}

const LAYERS = [
  ["默认值","bg-black"],["房间名称","bg-black"],["line","bg-black"],["A-WALL-BRIC","bg-[#f6c850]"],["A-DOOR","bg-[#5cc8f0]"],["0","bg-black"],["A-ANNO-TEXT","bg-black"],["A-ANNO-IDEN-LEVL","bg-[#00ff00]"],["管井文字","bg-[#7f7ff0]"],["A-DOOR-FIRE-IDEN","bg-black"],["A-DOOR-FIRE","bg-[#5cc8f0]"],["A-FLOR-SPCL","bg-[#d080d0]"],["A-FLOR-TXT","bg-[#d080d0]"],["A-ANNO-IDEN","bg-[#00ff00]"],["A-HATC-PATT","bg-[#777777]"],["设备运输路线","bg-[#0066cc]"],["A-WALL-CONC","bg-[#ffd060]"],["A-FLOR-STRS","bg-[#ffe000]"],["A-WALL-VISI","bg-[#1f78d0]"],["绘图","bg-black"],["物流","bg-[#603050]"],["Z-P洁具","bg-[#d080d0]"],["A-AXIS","bg-[#00ff00]"],["AXIS_TEXT","bg-black"],["A-COLU","bg-[#ffd060]"],["PUB_HATCH","bg-[#777777]"],["A-ANNO-DIMS","bg-[#30b040]"],["障板填充","bg-[#555555]"],["A_DETL_LIN2","bg-[#208080]"],
];

function LayerRow({ n, c, i }) {
  return (
    <div className="h-[12px] flex items-center border-b border-[#f4f4f4] relative">
      {n === "障板填充" && <ChevronDown size={7} strokeWidth={3} className="absolute left-[4px] text-[#444]" />}
      <span className={`ml-[15px] w-[114px] truncate ${i === 0 ? "font-bold text-[#111]" : "text-[#444]"} ${i === 28 ? "pl-[10px]" : ""}`}>{n}</span>
      {i === 0 ? <Check size={8} strokeWidth={2} className="ml-[-12px] w-[20px]" /> : <span className="w-[8px]" />}
      <span className={`w-[10px] flex justify-center ${i === 0 ? "ml-[-6px]" : ""}`}>{i > 0 && <Lightbulb size={8} fill="#f4dc88" className="text-[#b98d1a]" />}</span>
      <span className="w-[10px] flex justify-center">{i > 0 && <LockOpen size={8} fill="#f2c94c" className="text-[#8a6d1a]" />}</span>
      <span className={`w-[7.500px] h-[7.500px] ml-[2px] border border-[#555] ${c}`} />
      <span className="w-[8px] h-[8px] ml-[4px] rounded-full bg-[#fafafa] border border-[#f2f2f2]" />
      <span className={`ml-[37px] text-[#555] ${i === 0 ? "font-bold text-[#222]" : ""}`}>C</span>
    </div>
  );
}

function Layers() {
  const tool = [<File size={9} />, <Copy size={9} className="text-[#bbb]" />, <X size={10} className="text-[#bbb]" />, <Triangle size={8} fill="#bbb" className="text-[#bbb]" />, <Triangle size={8} fill="#bbb" className="text-[#bbb] rotate-180" />, <Triangle size={8} fill="#999" className="text-[#999] -rotate-90" />, <Filter size={9} fill="#2462a8" className="text-[#2462a8]" />, <FileText size={9} className="text-[#888]" />, <Hammer size={9} className="text-[#333]" />, <span className="block w-[9px] h-[9px] rounded-full bg-[#3060c8] text-white text-[6px] font-bold text-center leading-[9px]">?</span>];
  return (
    <div className="w-[226px] mt-[8px] flex flex-col text-[8.3px]">
      <div className="h-[21px] flex items-center pl-[5px] gap-[4.300px] text-[#444]">
        {tool.map((n, i) => <span key={i} className="w-[9px] flex justify-center">{n}</span>)}
      </div>
      <div className="flex-1 bg-white flex min-h-0">
        <div className="w-[218px] flex flex-col min-h-0 overflow-hidden">
          <div className="h-[14px] shrink-0 flex items-center border-b border-[#eeeeee] text-[#444] pl-[2px]">
            <span className="w-[120px]">图层</span>
            <span className="w-[10px] h-full border-l border-[#eee]" /><span className="w-[10px] h-full border-l border-[#eee]" /><span className="w-[10px] h-full border-l border-[#eee]" /><span className="w-[13px] h-full border-l border-[#eee]" />
            <span className="w-[45px] h-full border-l border-[#eee] pl-[2px] flex items-center">材质</span>
            <span className="border-l border-[#eee] pl-[1px] text-[#666]">线</span>
          </div>
          <div className="flex-1 overflow-hidden">
            {LAYERS.map(([n, c], i) => <LayerRow key={n} n={n} c={c} i={i} />)}
          </div>
          <div className="h-[8px] shrink-0 bg-[#f0f0f0] flex items-center">
            <ChevronLeft size={6} /><span className="w-[108px] h-[6px] bg-[#cdcdcd] ml-[1px]" /><span className="ml-auto"><ChevronRight size={6} /></span>
          </div>
        </div>
        <div className="w-[8px] bg-[#f0f0f0] flex flex-col items-center">
          <ChevronUp size={7} className="text-[#444]" />
          <div className="w-[8px] h-[196px] mt-[1px] bg-[#cdcdcd]" />
          <div className="mt-auto mb-[6px]"><ChevronDown size={7} className="text-[#444]" /></div>
        </div>
      </div>
    </div>
  );
}

function SideTabs() {
  const V = ({ children }) => <span className="[writing-mode:vertical-rl] text-[7.5px] leading-[8px] text-[#333]">{children}</span>;
  return (
    <div className="w-[16px] ml-[1px] flex flex-col items-center pt-[11px] text-[#333]">
      <span className="block w-[9px] h-[9px] rounded-full bg-[conic-gradient(#e33,#ec3,#3c3,#3cc,#33c,#c3c,#e33)] p-[2px]"><span className="block w-full h-full rounded-full bg-white" /></span>
      <V>属性</V>
      <svg className="mt-[5px]" width="10" height="8" viewBox="0 0 10 8"><path d="M0 0h8l-1 5-3 3-3-3z" fill="#c82020" /></svg>
      <V>图层</V>
      <span className="mt-[8px] w-[8px] h-[7px] rounded-full border border-[#2a6fb0]" />
      <V>DiiPanel_SEG</V>
      <Table2 size={9} className="mt-[8px] text-[#2a6fb0]" />
      <V>说明</V>
      <Monitor size={9} className="mt-[8px]" fill="#666" />
      <V>显示</V>
      <FileText size={9} className="mt-[8px] text-[#c8502a]" />
      <V>附注</V>
    </div>
  );
}

const Ck = ({ l, on = true, cls, off }) => (
  <div className={`${cls} shrink-0 flex items-center gap-[1px] whitespace-nowrap`}>
    <span className={`w-[8px] h-[8px] border flex items-center justify-center ${off ? "border-[#ccc] bg-[#eee]" : "border-[#777] bg-white"}`}>
      {on && !off && <Check size={7} strokeWidth={2} className="text-[#444]" />}
    </span>
    <span className={off ? "text-[#999]" : "text-[#444]"}>{l}</span>
  </div>
);

function RhinoBottom() {
  const a = [["端点",1,"w-[29.500px]"],["最近点",1,"w-[36px]"],["点",1,"w-[20px]"],["中点",1,"w-[30px]"],["中心点",0,"w-[35px]"],["交点",1,"w-[29px]"],["垂点",1,"w-[29px]"],["切点",0,"w-[28px]"],["四分点",1,"w-[37px]"],["节点",0,"w-[28px]"],["顶点",1,"w-[30px]"],["投影",2,"w-[36px]"],["停用",2,"w-[30px]"]];
  const b = [["点物件",1,"w-[40px]"],["曲线",1,"w-[47px]"],["曲面",1,"w-[41px]"],["多重曲面",1,"w-[44px]"],["细分物件",1,"w-[43px]"],["网格",1,"w-[28px]"],["注解",1,"w-[30px]"],["灯光",1,"w-[28px]"],["图块",1,"w-[28px]"],["控制点",1,"w-[37px]"],["点云",1,"w-[28px]"],["剖面线",1,"w-[37px]"],["其它",1,"w-[28px]"],["停用",2,"w-[29px]"],["子物件",2,"w-[36px]"]];
  const st = [["锁定格点","w-[37px]"],["正交","w-[23px]"],["平面模式","w-[34px] font-bold"],["物件锁点","w-[35px] font-bold"],["智慧轨迹","w-[35px]"],["操作轴","w-[30px]"],["记录建构历史","w-[50px]"],["过滤器","w-[29px]"]];
  return (
    <div className="flex flex-col text-[7.5px]">
      <div className="h-[15px] flex items-center pl-[45px] gap-[8px] text-[#444] text-[8px]">
        <span>Top</span><span>Perspective</span><span>Front</span><span>Right</span><span className="text-[#999] ml-[5px]">⊙</span>
      </div>
      <div className="h-[15px] mt-[2px] pl-[5px] flex items-center">{a.map(([l, v, c]) => <Ck key={l} l={l} on={v === 1} off={v === 2} cls={c} />)}</div>
      <div className="h-[15px] pl-[5px] flex items-center">{b.map(([l, v, c]) => <Ck key={l} l={l} off={v === 2} cls={c} />)}</div>
      <div className="h-[10px] mt-[6px] bg-white flex items-center text-[8px] text-[#333] overflow-hidden">
        <span className="w-[37px] h-full bg-[#d9e9f8] text-center leading-[10px]">世界</span>
        <span className="w-[97px] pl-[2px] h-full leading-[10px] border-r border-[#e4e4e4] whitespace-nowrap">x 19682.065 y 23631.261</span>
        <span className="w-[50px] h-full text-center leading-[10px] border-r border-[#e4e4e4]">z</span>
        <span className="w-[48px] h-full text-center leading-[10px] border-r border-[#e4e4e4]">毫米</span>
        <span className="w-[96px] h-full pl-[3px] flex items-center border-r border-[#e4e4e4] gap-[1px]"><span className="w-[7px] h-[8px] bg-black" />默认值</span>
        {st.map(([t, c]) => <span key={t} className={`${c} h-full text-center leading-[10px] border-r border-[#e4e4e4] whitespace-nowrap`}>{t}</span>)}
      </div>
    </div>
  );
}

function Rhino() {
  const tabs = [["标准","w-[38px] bg-[#fbfcfe] border border-b-0 border-[#dfe2e7] rounded-t-[3px]"],["工作平面","w-[51px]"],["设置视图","w-[54px]"],["显示","w-[36px]"],["选取","w-[39px]"],["工作视窗配置","w-[68px]"],["可见性","w-[47px]"],["变动","w-[35px]"],["曲线工具","w-[53px]"],["曲面工具","w-[53px]"],["实体工具","w-[52px]"],["细分工具","w-[48px]"]];
  return (
    <div className="absolute left-[458px] top-[26px] w-[622px] h-[582px] bg-[#eef0f4] flex flex-col shadow-[-2px_0_3px_rgba(0,0,0,0.12)] text-[8px]">
      <div className="h-[29px] bg-[#f6f6f6] flex items-start pt-[2px] pl-[4px]">
        <svg width="9" height="9" viewBox="0 0 9 9"><rect width="9" height="9" fill="#222" /><path d="M2 3l3 1 2 3-3-1z" fill="#fff" /></svg>
        <span className="ml-[4px] text-[#b4b4b4] text-[7.5px] leading-[10px]">C:\Users\suny\Desktop\销售演示案例\一层文字cad.3dm (8 MB) - Rhino 7 教育版 - [Top]</span>
        <span className="ml-auto flex items-center gap-[18px] pr-[6px] text-[#cfcfcf]"><Minus size={8} /><Square size={7} /><X size={8} /></span>
      </div>
      <div className="h-[11px] bg-[#f6f6f6] pl-[4px] text-[7.5px] text-[#999] flex gap-[8px] items-center relative">
        <span>Paneling Tools</span><span>说明(H)</span>
        <span className="absolute left-[550px] top-[-13px] text-[#aaa]">edical</span>
      </div>
      <div className="ml-[4px] h-[41px] bg-white flex">
        <div className="flex-1 pl-[1px] text-[#333] leading-[14px] text-[8px] mt-[-1px]">
          <div>已加入 340 个文字至选取集合。</div><div>已加入 340 个文字至选取集合。</div><div>已加入 340 个文字至选取集合。</div>
        </div>
        <div className="w-[5px] bg-[#f0f0f0] flex flex-col items-center overflow-hidden">
          <ChevronUp size={5} className="text-[#444]" />
          <div className="w-[5px] h-[8px] mt-[18px] bg-[#cdcdcd]" />
          <div className="mt-auto"><ChevronDown size={5} className="text-[#444]" /></div>
        </div>
      </div>
      <div className="ml-[4px] h-[13px] bg-white border-t border-[#ccc] pl-[1px] leading-[11px] text-[#222] font-medium">指令:</div>
      <div className="h-[5px]" />
      <div className="h-[16px] pl-[4px] flex items-stretch text-[#444] text-[8px] leading-[17px] overflow-hidden">
        {tabs.map(([t, c]) => <div key={t} className={`${c} text-center shrink-0`}>{t}</div>)}
        <span className="ml-[1px] text-[#777]">»</span><Settings size={8} className="ml-[1px] mt-[4px] text-[#999]" />
        <Files size={12} className="ml-[8px] mt-[1px] text-[#444]" />
      </div>
      <TopTools />
      <div className="flex h-[384px] min-h-0">
        <LeftTools />
        <Viewport />
        <Palette />
        <Layers />
        <SideTabs />
      </div>
      <RhinoBottom />
    </div>
  );
}

function Grasshopper() {
  return (
    <div className="absolute left-[446px] top-[37px] w-[561px] h-[18px] bg-white shadow-[0_1px_4px_rgba(0,0,0,0.55)] flex items-center pl-[4px] text-[8px] text-[#333]">
      <span>Grasshopper - 002.房间名称自动匹配*</span>
      <span className="ml-auto flex items-center gap-[19px] pr-[9px] text-[#444]"><Minus size={9} /><Square size={8} /><X size={9} /></span>
    </div>
  );
}

export default function App() {
  return (
    <div className="relative w-[1080px] h-[608px] overflow-hidden bg-[#d9d9d9] text-[#222] font-['Noto_Sans','Noto_Sans_CJK_SC',sans-serif] blur-[0.5px]">
      <div className="h-[1px] bg-[#555]" />
      <div className="bg-[#cfcfcf]"><QuickBar /><RibbonTabs /></div>
      <Ribbon />
      <div className="h-[14px] bg-[#ececec] pl-[5px]"><div className="w-[6px] h-full bg-[#e6efd8]" /></div>
      <div className="flex h-[511px]">
        <div className="w-[202px] flex flex-col bg-[#f0f0f0]">
          <Properties />
          <Browser />
        </div>
        <ViewArea />
      </div>
      <Rhino />
      <Grasshopper />
      <svg className="absolute left-[882px] top-[32px]" width="9" height="13" viewBox="0 0 9 13"><path d="M1 1v10l2.500-2 2 3 1.500-1-2-3h3z" fill="#fff" stroke="#333" strokeWidth=".8" /></svg>
    </div>
  );
}
